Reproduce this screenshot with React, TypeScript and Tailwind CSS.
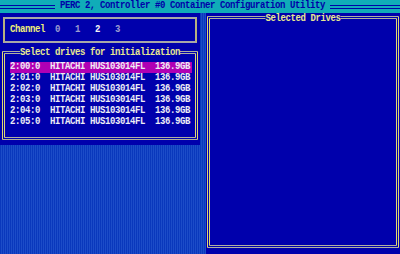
import type { ReactNode } from "react";

const rows = ["2:00:0", "2:01:0", "2:02:0", "2:03:0", "2:04:0", "2:05:0"];

// dithered desktop fill behind the windows
const dither =
  "bg-[image:repeating-linear-gradient(90deg,#0a38bc_0px,#0a38bc_1px,#1c4cc8_1px,#1c4cc8_2px)]";

// text-mode glyphs are narrow and tall: stretch a small mono font vertically
function T({ children, className = "" }: { children: ReactNode; className?: string }) {
  return <span className={`inline-block scale-y-[1.22] whitespace-pre ${className}`}>{children}</span>;
}

export default function App() {
  return (
    <div className="flex h-[254px] w-[400px] flex-col overflow-hidden bg-[#0000ac] font-['Liberation_Mono',monospace] text-[9px] font-bold leading-[11px] tracking-[-0.4px]">
      {/* title bar */}
      <header className="flex h-[13px] shrink-0 items-center bg-[#10acb8]">
        <div className="h-[4px] w-[55px] border-y border-[#0000a8]" />
        <T className="mx-[5px] text-[#0000a8]">PERC 2, Controller #0 Container Configuration Utility</T>
        <div className="h-[4px] flex-1 border-y border-[#0000a8]" />
      </header>

      <div className="flex min-h-0 flex-1">
        {/* left column */}
        <div className="flex w-[200px] flex-col">
          <div className="h-[132px] px-[2px] pt-[4px]">
            <div className="mx-[1px] flex h-[26px] items-center border-2 border-x-[#b8b080] border-y-[#a8a8a8] pl-[5px]">
              <T className="text-[#f0f078]">Channel  </T>
              <T className="text-[#9c9cd0]">0   1   </T>
              <T className="text-[#f4f4f4]">2   </T>
              <T className="text-[#9c9cd0]">3</T>
            </div>

            <div className="relative mt-[8px] h-[89px] border-[3px] border-double border-x-[#e0d870] border-y-[#b0b0a0] pl-[5px] pt-[8px]">
              <span className="absolute left-1/2 top-[-6px] -translate-x-1/2 bg-[#0000ac] text-[#e8e890]">
                <T>Select drives for initialization</T>
              </span>
              {rows.map((id, i) => (
                <div
                  key={id}
                  className={`h-[11px] w-[182px] text-[#ececf4] ${i === 0 ? "bg-[#b000b4]" : ""}`}
                >
                  <T>{`${id}  HITACHI HUS103014FL  136.9GB`}</T>
                </div>
              ))}
            </div>
          </div>
          <div className={`flex-1 ${dither}`} />
        </div>

        <div className={`w-[6px] ${dither}`} />

        {/* right column */}
        <div className="flex-1 px-[1px] pb-[6px] pt-[3px]">
          <div className="relative h-full border-[3px] border-double border-x-[#e0d870] border-y-[#b0b0a0]">
            <span className="absolute left-1/2 top-[-5px] -translate-x-1/2 bg-[#0000ac] text-[#e8e890]">
              <T>Selected Drives</T>
            </span>
          </div>
        </div>
      </div>
    </div>
  );
}
